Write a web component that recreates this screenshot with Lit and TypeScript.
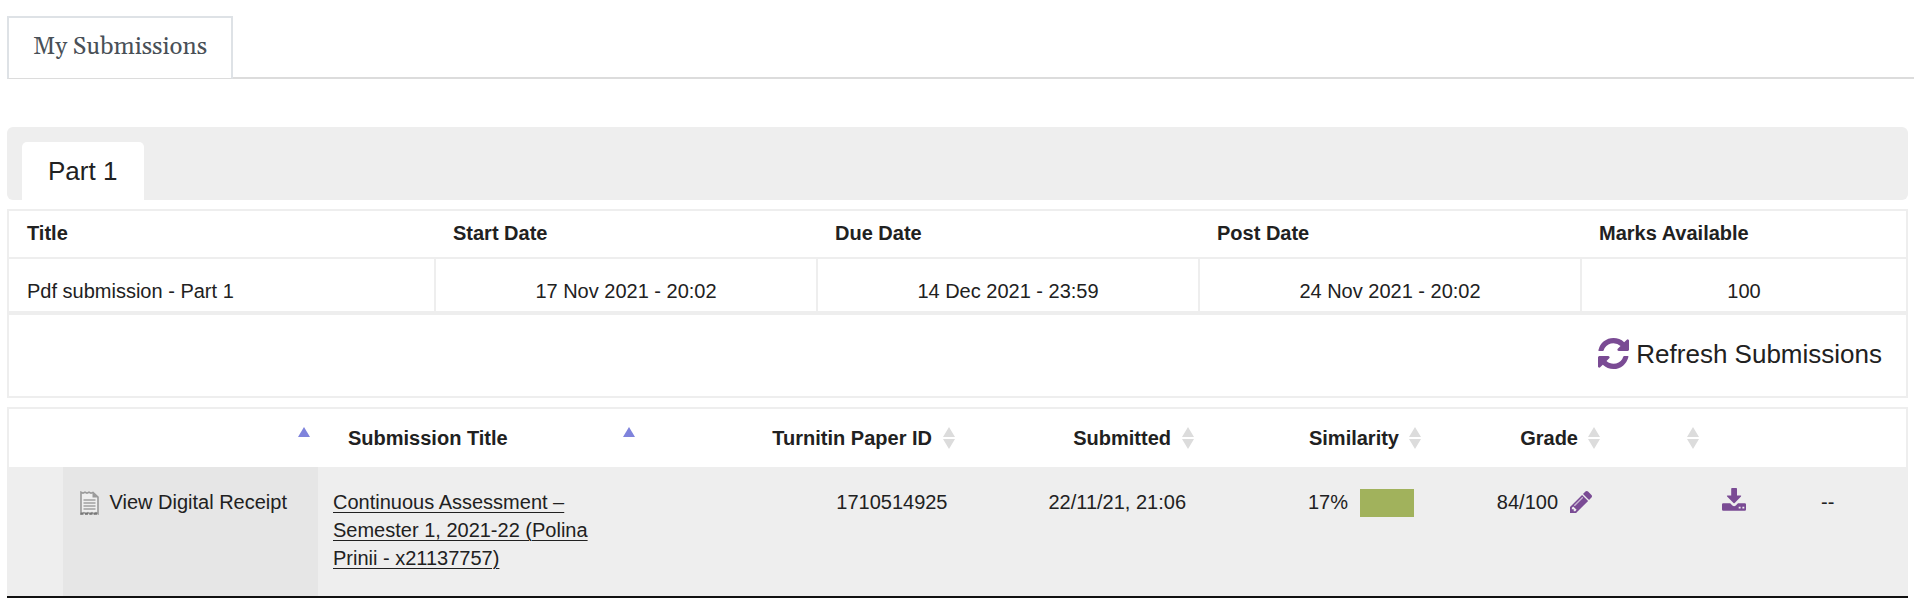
import { LitElement, html, css } from "lit";
import { customElement } from "lit/decorators.js";

const refreshIcon = html`<svg class="refresh-icon" viewBox="0 128 1536 1536" preserveAspectRatio="none">
  <path fill="#7a4b94" d="M1511 1056q0 5-1 7-64 268-268 434.5t-478 166.5q-146 0-282.5-55t-243.5-157l-129 129q-19 19-45 19t-45-19-19-45v-448q0-26 19-45t45-19h448q26 0 45 19t19 45-19 45l-137 137q71 66 161 102t187 36q134 0 250-65t186-179q11-17 53-117 8-23 30-23h192q13 0 22.5 9.5t9.5 22.5zm25-800v448q0 26-19 45t-45 19h-448q-26 0-45-19t-19-45 19-45l138-138q-148-137-349-137-134 0-250 65t-186 179q-11 17-53 117-8 23-30 23h-199q-13 0-22.5-9.5t-9.5-22.5v-7q65-268 270-434.5t480-166.5q146 0 284 55.5t245 156.5l130-129q19-19 45-19t45 19 19 45z"/>
</svg>`;

const pencilIcon = html`<svg class="pencil-icon" viewBox="0 149 1515 1515">
  <path fill="#7a4b94" d="M363 1536l91-91-235-235-91 91v107h128v128h107zm523-928q0-22-22-22-10 0-17 7l-542 542q-7 7-7 17 0 22 22 22 10 0 17-7l542-542q7-7 7-17zm-54-192l416 416-832 832h-416v-416zm683 96q0 53-37 90l-166 166-416-416 166-165q36-38 90-38 53 0 91 38l235 234q37 39 37 91z"/>
  <path stroke="#c9b6d3" stroke-width="80" stroke-linecap="round" d="M330 1130L850 610"/>
</svg>`;

const downloadIcon = html`<svg class="download-icon" viewBox="0 0 24 23">
  <path fill="#7a4b94" d="M10 0h4.200q.8 0 .8.800V7.500h3.600q1.100 0 .4.900L12.700 15q-.6.600-1.200 0L5.100 8.400q-.7-.9.400-.9H9.200V.8q0-.8.800-.8z"/>
  <path fill="#7a4b94" d="M1.200 15.200H8.200l2.200 2.200q1.700 1.500 3.400 0l2.200-2.200h6.800q1.200 0 1.200 1.200v5.200q0 1.200-1.200 1.200H1.200Q0 22.800 0 21.600v-5.200q0-1.200 1.200-1.200z"/>
  <path fill="#eee" d="M16.700 18.700h1.900v1.900h-1.900zM20.400 18.700h1.900v1.900h-1.900z"/>
</svg>`;

const receiptIcon = html`<svg class="receipt-icon" viewBox="0 0 19 24">
  <path fill="#efefef" stroke="#9a9a9a" stroke-width="1.600" d="M1 22.800V1.200l2 1 2-1 2 1 2-1 2 1 2-.8L18 6v16.800l-2-1.200-2 1.200-2-1.200-2 1.200-2-1.200-2 1.200-2-1.200z"/>
  <path fill="#9a9a9a" d="M12.500 1.200L18.200 6.500H12.500z"/>
  <path stroke="#b4b4b4" stroke-width="2" d="M3.500 9h12M3.500 12h12M3.500 15h12M3.500 18h12"/>
  <path stroke="#777" stroke-width="2" stroke-dasharray="3 1.500" d="M.5 22.800H18.500"/>
</svg>`;

const sortBoth = html`<svg class="sort" viewBox="0 0 12 22">
  <path fill="#dcdcdc" d="M6 0L12 10H0zM0 12H12L6 22z"/>
</svg>`;

const sortUp = html`<svg class="sort-up" viewBox="0 0 12 10">
  <path fill="#7f83dc" d="M6 0L12 10H0z"/>
</svg>`;

@customElement("app-root")
export class AppRoot extends LitElement {
  static styles = css`
    :host {
      display: block;
      box-sizing: border-box;
      height: 614px;
      padding: 16px 8px 0 7px;
      background: #fff;
      color: #212121;
      font: 20px/28px "Liberation Sans", Arial, sans-serif;
      white-space: nowrap;
    }
    * { box-sizing: border-box; }
    svg { display: block; flex: none; }
    .tabs { display: flex; height: 63px; }
    .tab {
      width: 226px;
      border: 2px solid #dee2e6;
      border-bottom: 1px solid #dcdcdc;
      padding: 14px 0 0 24px;
      font: 24px/30px Georgia, Gelasio, "Liberation Serif", serif;
      color: #495057;
    }
    .tabs-rest { flex: 1; border-bottom: 2px solid #dcdcdc; }
    .panel { width: 1901px; margin-top: 48px; }
    .parts {
      height: 73px;
      padding: 15px 0 0 15px;
      background: #eee;
      border-radius: 6px;
    }
    .part {
      width: 122px;
      height: 58px;
      padding: 14px 0 0 26px;
      border-radius: 5px 5px 0 0;
      background: #fff;
      font-size: 26px;
      line-height: 30px;
    }
    .info { margin-top: 9px; border: 2px solid #eee; height: 189px; }
    .info-row { display: grid; grid-template-columns: 427px 382px 382px 382px 1fr; }
    .info-head { height: 48px; border-bottom: 2px solid #eee; font-weight: bold; }
    .info-head > div { padding: 8px 0 0 17px; }
    .info-head > div:first-child, .info-body > div:first-child { padding-left: 18px; text-align: left; }
    .info-body { height: 56px; border-bottom: 4px solid #eee; }
    .info-body > div { padding-top: 18px; text-align: center; border-right: 2px solid #eee; }
    .info-body > div:last-child { border-right: 0; }
    .refresh {
      display: flex;
      justify-content: flex-end;
      align-items: center;
      height: 77px;
      padding-right: 24px;
      gap: 7px;
      font-size: 26px;
    }
    .refresh-icon { width: 31px; height: 31px; }
    .subs { margin-top: 9px; border-bottom: 2px solid #111; }
    .row { display: grid; grid-template-columns: 56px 255px 325px 319px 239px 229px 180px 103px 1fr; }
    .row > div { display: flex; align-items: flex-start; }
    .head {
      height: 60px;
      padding-top: 15px;
      border: 2px solid #eee;
      border-bottom: 0;
      font-weight: bold;
      grid-template-columns: 54px 255px 325px 320px 239px 227px 179px 99px 1fr;
    }
    .head > div.end { justify-content: flex-end; gap: 11px; padding-right: 8px; }
    .head > div.tight { gap: 10px; }
    .head .sort { width: 12px; height: 22px; margin-top: 3px; }
    .sort-up { width: 12px; height: 10px; margin-top: 3px; }
    .head > .title-head { justify-content: space-between; padding: 0 8px 0 30px; }
    .body { height: 129px; background: #eee; }
    .body > div { padding-top: 21px; }
    .body .receipt { background: #e6e6e6; padding-left: 17px; gap: 10.500px; }
    .receipt-icon { width: 19px; height: 24px; margin-top: 3px; }
    .link { white-space: normal; padding-left: 15px; }
    .link a { width: 270px; text-decoration: underline; text-decoration-thickness: 1.300px; text-underline-offset: 3px; }
    .body .right { justify-content: flex-end; }
    .id { padding-right: 14.500px; }
    .date { padding-right: 15px; }
    .similarity { padding-right: 16px; gap: 12px; }
    .swatch { width: 54px; height: 28px; margin-top: 1px; background: #a1b25c; }
    .grade { padding-right: 18px; gap: 12px; }
    .pencil-icon { width: 22px; height: 22px; margin-top: 3px; }
    .body .download { padding-left: 112px; margin-right: -40px; }
    .download-icon { width: 24px; height: 23px; }
    .dash { padding-left: 108px; }
  `;

  render() {
    return html`
      <div class="tabs">
        <div class="tab">My Submissions</div>
        <div class="tabs-rest"></div>
      </div>
      <div class="panel">
        <div class="parts"><div class="part">Part 1</div></div>
        <div class="info">
          <div class="info-row info-head">
            ${["Title", "Start Date", "Due Date", "Post Date", "Marks Available"].map((t) => html`<div>${t}</div>`)}
          </div>
          <div class="info-row info-body">
            ${["Pdf submission - Part 1", "17 Nov 2021 - 20:02", "14 Dec 2021 - 23:59", "24 Nov 2021 - 20:02", "100"].map((t) => html`<div>${t}</div>`)}
          </div>
          <div class="refresh">${refreshIcon}<span>Refresh Submissions</span></div>
        </div>
        <div class="subs">
          <div class="row head">
            <div></div>
            <div class="end">${sortUp}</div>
            <div class="title-head"><span>Submission Title</span>${sortUp}</div>
            <div class="end">Turnitin Paper ID${sortBoth}</div>
            <div class="end">Submitted${sortBoth}</div>
            <div class="end tight">Similarity${sortBoth}</div>
            <div class="end tight">Grade${sortBoth}</div>
            <div class="end">${sortBoth}</div>
            <div></div>
          </div>
          <div class="row body">
            <div></div>
            <div class="receipt">${receiptIcon}<span>View Digital Receipt</span></div>
            <div class="link"><a>Continuous Assessment – Semester 1, 2021-22 (Polina Prinii - x21137757)</a></div>
            <div class="right id">1710514925</div>
            <div class="right date">22/11/21, 21:06</div>
            <div class="right similarity">17%<span class="swatch"></span></div>
            <div class="right grade">84/100${pencilIcon}</div>
            <div class="download">${downloadIcon}</div>
            <div class="dash">--</div>
          </div>
        </div>
      </div>
    `;
  }
}
